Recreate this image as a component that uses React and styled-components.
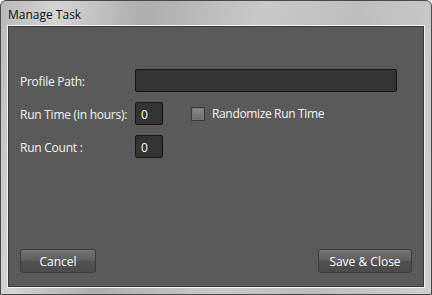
import React from 'react'
import styled, { createGlobalStyle } from 'styled-components'

const Global = createGlobalStyle`
    html, body { margin: 0; padding: 0; background: #fff; }
    * { box-sizing: border-box; }
`

const Window = styled.div`
    width: 432px;
    height: 295px;
    display: flex;
    flex-direction: column;
    border: 1px solid #4a4a4a;
    border-radius: 6px 6px 0 0;
    background: linear-gradient(100deg, #b9b9b9 0%, #d4d4d4 12%, #adadad 30%, #c9c9c9 55%, #bdbdbd 75%, #cfcfcf 100%);
    font-family: "Open Sans", "Liberation Sans", sans-serif;
`

const TitleBar = styled.div`
    height: 24px;
    padding: 2px 0 0 7px;
    display: flex;
    align-items: center;
    font-size: 12px;
    color: #111;
`

const Frame = styled.div`
    flex: 1;
    margin: 0 6px 6px 6px;
    border: 1px solid #f2f2f2;
    background: #5a5a5a;
    box-shadow: inset 0 0 0 1px #3c3c3c;
    display: flex;
    flex-direction: column;
    justify-content: space-between;
    padding: 43px 12px 14px 12px;
`

const Form = styled.div`
    display: grid;
    grid-template-columns: 115px auto;
    row-gap: 10px;
`

const Label = styled.div`
    display: flex;
    align-items: center;
    padding-top: 2px;
    font-size: 12px;
    color: #f2f2f2;
    letter-spacing: -0.25px;
`

const Row = styled.div`
    display: flex;
    align-items: center;
    gap: 28px;
`

const Input = styled.div`
    width: ${p => p.$width}px;
    height: 23px;
    background: #333;
    border: 1px solid #161616;
    border-radius: 2px;
    color: #fff;
    font-size: 12px;
    padding: 1px 0 0 5px;
    display: flex;
    align-items: center;
`

const Check = styled.label`
    display: flex;
    align-items: center;
    gap: 7px;
    font-size: 12px;
    color: #f2f2f2;
    letter-spacing: -0.35px;
`

const Box = styled.span`
    width: 14px;
    height: 14px;
    border: 1px solid #3a3a3a;
    background: linear-gradient(#8c8c8c, #6c6c6c);
    box-shadow: inset 0 0 0 1px #7a7a7a;
`

const Buttons = styled.div`
    display: flex;
    justify-content: space-between;
`

const Button = styled.button`
    width: ${p => p.$width}px;
    height: 24px;
    border: 1px solid #3c3c3c;
    border-radius: 3px;
    background: linear-gradient(#727272, #5e5e5e 50%, #515151 51%, #4c4c4c);
    box-shadow: inset 0 1px 0 #7e7e7e;
    color: #fff;
    font-family: inherit;
    font-size: 12px;
    padding: 0;
`

export default function App() {
    return (
        <>
            <Global />
            <Window>
                <TitleBar>Manage Task</TitleBar>
                <Frame>
                    <Form>
                        <Label>Profile Path:</Label>
                        <Input $width={262} />
                        <Label>Run Time (in hours):</Label>
                        <Row>
                            <Input $width={28}>0</Input>
                            <Check>
                                <Box />
                                Randomize Run Time
                            </Check>
                        </Row>
                        <Label>Run Count :</Label>
                        <Row>
                            <Input $width={28}>0</Input>
                        </Row>
                    </Form>
                    <Buttons>
                        <Button $width={76}>Cancel</Button>
                        <Button $width={94}>Save &amp; Close</Button>
                    </Buttons>
                </Frame>
            </Window>
        </>
    )
}
